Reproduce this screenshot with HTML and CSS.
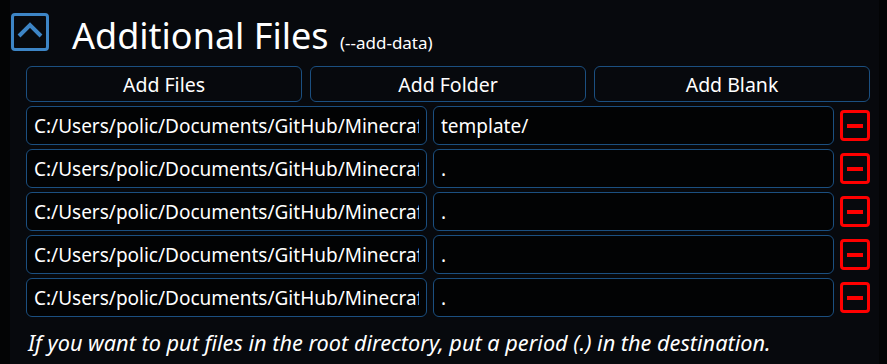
FILE: index.html
```html
<!DOCTYPE html>
<html lang="en">
<head>
    <meta charset="UTF-8">
    <meta name="viewport" content="width=device-width, initial-scale=1.0">
    <title>Additional Files</title>
    <link rel="stylesheet" href="styles.css">
</head>
<body>
    <div class="panel">
        <div class="section-header">
            <button class="collapse-btn" title="Collapse">
                <svg width="32" height="32" viewBox="0 0 32 32">
                    <polyline points="5,20 16,9 27,20" fill="none" stroke="#3d85c6" stroke-width="4"/>
                </svg>
            </button>
            <h2>Additional Files <span class="flag">(--add-data)</span></h2>
        </div>

        <div class="section-body">
            <div class="actions">
                <button class="action-btn">Add Files</button>
                <button class="action-btn">Add Folder</button>
                <button class="action-btn">Add Blank</button>
            </div>

            <div class="file-row">
                <input class="field" type="text" value="C:/Users/polic/Documents/GitHub/Minecraft-Server-Manager/template">
                <input class="field" type="text" value="template/">
                <button class="remove-btn" title="Remove"><span></span></button>
            </div>
            <div class="file-row">
                <input class="field" type="text" value="C:/Users/polic/Documents/GitHub/Minecraft-Server-Manager/icon.ico">
                <input class="field" type="text" value=".">
                <button class="remove-btn" title="Remove"><span></span></button>
            </div>
            <div class="file-row">
                <input class="field" type="text" value="C:/Users/polic/Documents/GitHub/Minecraft-Server-Manager/logo.png">
                <input class="field" type="text" value=".">
                <button class="remove-btn" title="Remove"><span></span></button>
            </div>
            <div class="file-row">
                <input class="field" type="text" value="C:/Users/polic/Documents/GitHub/Minecraft-Server-Manager/config.json">
                <input class="field" type="text" value=".">
                <button class="remove-btn" title="Remove"><span></span></button>
            </div>
            <div class="file-row">
                <input class="field" type="text" value="C:/Users/polic/Documents/GitHub/Minecraft-Server-Manager/README.md">
                <input class="field" type="text" value=".">
                <button class="remove-btn" title="Remove"><span></span></button>
            </div>

            <p class="note">If you want to put files in the root directory, put a period (.) in the destination.</p>
        </div>
    </div>
</body>
</html>
```

FILE: styles.css
```css
html, body {
    margin: 0;
    height: 100%;
    background: #030405;
}
body {
    font-family: "Noto Sans", "Open Sans", sans-serif;
    color: #ffffff;
}
.panel {
    margin-left: 10px;
    width: 869px;
    height: 100%;
    background: #07090d;
    overflow: hidden;
}
.section-header {
    display: flex;
    align-items: flex-start;
    gap: 23px;
    height: 38px;
    padding: 13px 0 0 1px;
}
.collapse-btn {
    width: 38px;
    height: 38px;
    padding: 0;
    border: 3px solid #3d85c6;
    border-radius: 4px;
    background: transparent;
    display: flex;
    align-items: center;
    justify-content: center;
    cursor: pointer;
}
.section-header h2 {
    margin: 4px 0 0;
    font-size: 36px;
    font-weight: normal;
    line-height: 38px;
    white-space: nowrap;
}
.flag {
    font-size: 17px;
    margin-left: 2px;
}
.section-body {
    padding: 15px 9px 0 16px;
}
.actions {
    display: grid;
    grid-template-columns: 1fr 1fr 1fr;
    gap: 8px;
    margin-bottom: 4px;
}
.action-btn {
    height: 36px;
    background: #07090d;
    color: #ffffff;
    border: 1px solid #1b4f80;
    border-radius: 6px;
    font-family: inherit;
    font-size: 19.5px;
    cursor: pointer;
}
.file-row {
    display: grid;
    grid-template-columns: 1fr 1fr 30px;
    gap: 6px;
    align-items: center;
    margin-bottom: 4px;
}
.field {
    height: 39px;
    box-sizing: border-box;
    padding: 0 7px;
    background: #020304;
    color: #ffffff;
    border: 1px solid #1b4f80;
    border-radius: 6px;
    font-family: inherit;
    font-size: 19px;
    min-width: 0;
    outline: none;
}
.remove-btn {
    width: 30px;
    height: 31px;
    padding: 0;
    background: transparent;
    border: 3px solid #ff0000;
    border-radius: 4px;
    display: flex;
    align-items: center;
    justify-content: center;
    cursor: pointer;
}
.remove-btn span {
    display: block;
    width: 16px;
    height: 4px;
    background: #ff0000;
}
.note {
    margin: 11px 0 0 2px;
    font-size: 21.7px;
    font-style: italic;
    white-space: nowrap;
}
```
